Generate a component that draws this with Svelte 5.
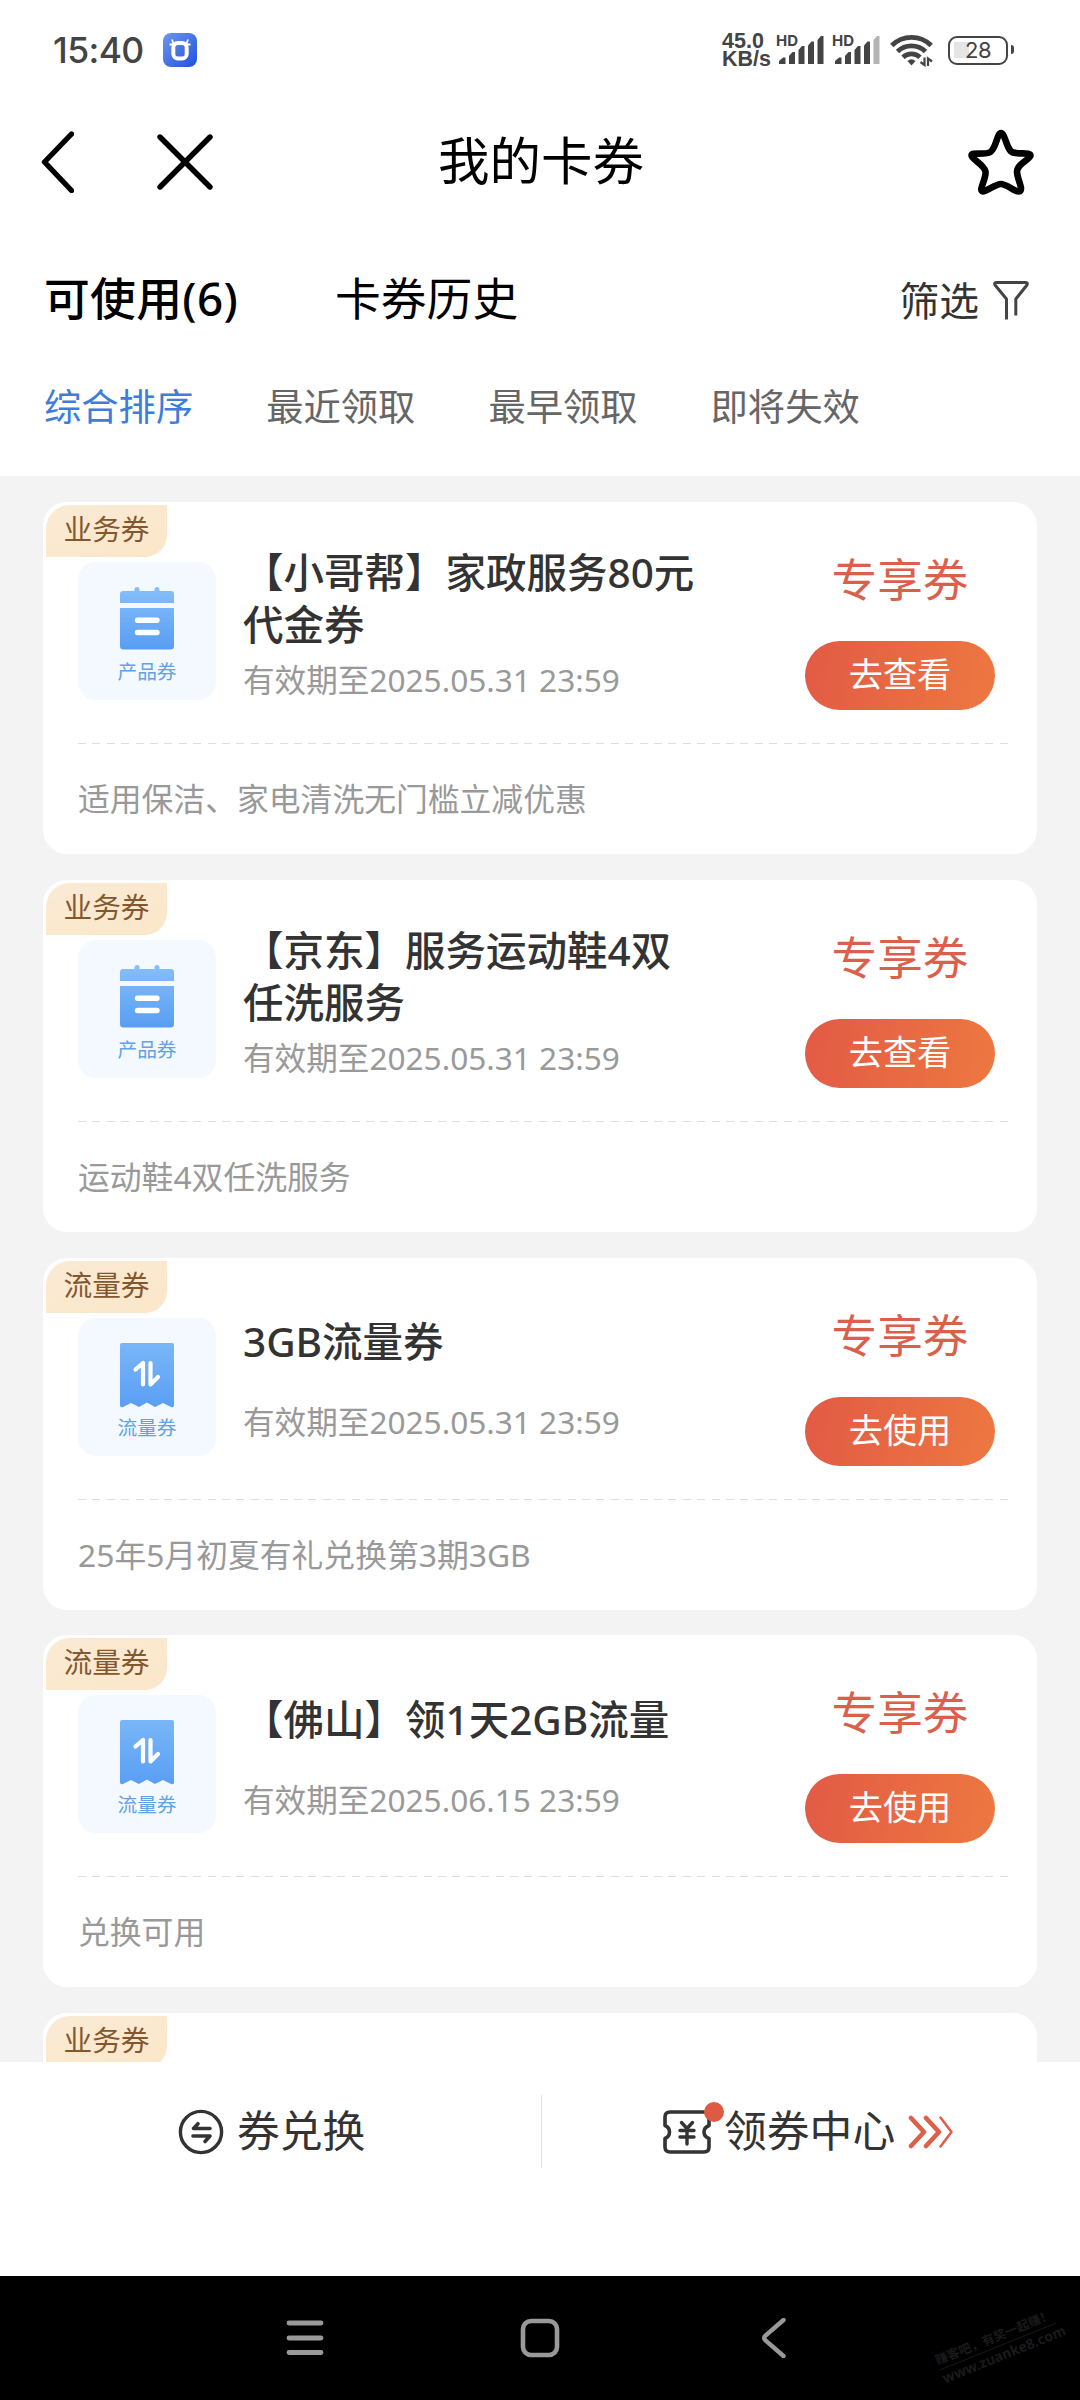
<script>
    const sorts = ['综合排序', '最近领取', '最早领取', '即将失效'];
    let activeSort = '综合排序';

    const coupons = [
        {
            tag: '业务券',
            kind: 'product',
            kindLabel: '产品券',
            title: '【小哥帮】家政服务80元代金券',
            expires: '2025.05.31 23:59',
            action: '去查看',
            desc: '适用保洁、家电清洗无门槛立减优惠'
        },
        {
            tag: '业务券',
            kind: 'product',
            kindLabel: '产品券',
            title: '【京东】服务运动鞋4双任洗服务',
            expires: '2025.05.31 23:59',
            action: '去查看',
            desc: '运动鞋4双任洗服务'
        },
        {
            tag: '流量券',
            kind: 'data',
            kindLabel: '流量券',
            title: '3GB流量券',
            expires: '2025.05.31 23:59',
            action: '去使用',
            desc: '25年5月初夏有礼兑换第3期3GB'
        },
        {
            tag: '流量券',
            kind: 'data',
            kindLabel: '流量券',
            title: '【佛山】领1天2GB流量',
            expires: '2025.06.15 23:59',
            action: '去使用',
            desc: '兑换可用'
        },
        { tag: '业务券' }
    ];

    const signals = [5, 4];
</script>

<div class="phone">
    <div class="status">
        <span class="time">15:40</span>
        <svg class="app-logo" width="34" height="34" viewBox="0 0 34 34">
            <defs>
                <linearGradient id="logoFill" x1="0" y1="0" x2="1" y2="1">
                    <stop offset="0" stop-color="#6f97ea" />
                    <stop offset="1" stop-color="#1f50e0" />
                </linearGradient>
            </defs>
            <rect width="34" height="34" rx="8" fill="url(#logoFill)" />
            <rect x="10.3" y="10" width="13.4" height="15.5" rx="4.5" fill="none" stroke="#fff" stroke-width="4" />
            <path d="M9 6.5l1.5 4.5M6.5 11.5h4M25 6.5L23.5 11M27.5 11.5h-4" stroke="#fff" stroke-width="1.8" />
        </svg>
        <div class="speed"><span>45.0</span><span>KB/s</span></div>
        {#each signals as level}
            <div class="signal">
                <span>HD</span>
                <svg width="46" height="34" viewBox="0 0 46 34">
                    <path d="M1 31v-3l4-3.500h2.500V31z" />
                    <path d="M11 31V23l3.500-4H17V31z" />
                    <path d="M20.500 31V17l3.500-4h2.500V31z" />
                    <path d="M30 31V12.500l3.500-4H36V31z" />
                    <path d="M39.500 31V7L43 3h2.500V31z" opacity={level < 5 ? 0.4 : 1} />
                </svg>
            </div>
        {/each}
        <svg class="wifi" width="44" height="34" viewBox="0 0 44 34">
            <g fill="none" stroke="#444" stroke-width="4.8">
                <path d="M1.800 12.500a28 28 0 0 1 39.400 0" />
                <path d="M7.500 18.500a20 20 0 0 1 28 0" />
                <path d="M13 24.300a12.500 12.500 0 0 1 17 0" />
            </g>
            <path d="M17.500 28q4-3.500 8 0l-4 4.500z" fill="#444" />
            <path d="M30.500 29l4 3v-7.500M42 28.500l-4-3V33" fill="none" stroke="#444" stroke-width="2.2" />
        </svg>
        <div class="battery"><span>28</span></div>
    </div>

    <div class="topbar">
        <svg class="back" width="34" height="62" viewBox="0 0 34 62">
            <path d="M31.500 3L4.500 31 31.500 59.500" fill="none" stroke="#000" stroke-width="5.4" stroke-linecap="round" stroke-linejoin="round" />
        </svg>
        <svg class="close" width="56" height="56" viewBox="0 0 56 56">
            <path d="M3 3l50 50M53 3L3 53" stroke="#000" stroke-width="5.4" stroke-linecap="round" />
        </svg>
        <h1>我的卡券</h1>
        <svg class="star" width="68" height="68" viewBox="0 0 68 68">
            <path d="M34 5C38 5 39.500 22.500 46 24.500S63.500 24 63.500 27.500 50 36 50 43.500 56.500 61 53 63.200 40 56 34 56 18 65 15 63.200 19.500 50 18.500 43.500 4.500 31 4.500 27.500 16 27 22.500 24.500 30 5 34 5z" fill="none" stroke="#000" stroke-width="6.6" stroke-linejoin="round" />
        </svg>
    </div>

    <div class="tabs">
        <span class="tab active">可使用(6)</span>
        <span class="tab">卡券历史</span>
        <span class="filter">
            筛选
            <svg width="36" height="40" viewBox="0 0 36 40">
                <path d="M13.500 38.500V18L2 4q-1-2.500 1.500-2.500h29Q35 1.500 34 4L22.800 18v16.500" fill="none" stroke="#444" stroke-width="3" stroke-linejoin="round" />
            </svg>
        </span>
    </div>

    <div class="sorts">
        {#each sorts as sort}
            <span class:selected={sort === activeSort} on:click={() => (activeSort = sort)} role="presentation">{sort}</span>
        {/each}
    </div>

    <div class="list">
        {#each coupons as coupon}
            <div class="card">
                <span class="tag">{coupon.tag}</span>
                {#if coupon.title}
                    <div class="main">
                        <div class="tile">
                            {#if coupon.kind === 'product'}
                                <svg width="54" height="63" viewBox="0 0 54 63">
                                    <defs>
                                        <linearGradient id="blue" x1="0" y1="0" x2="0" y2="63" gradientUnits="userSpaceOnUse">
                                            <stop offset="0" stop-color="#86bffa" />
                                            <stop offset="1" stop-color="#589df3" />
                                        </linearGradient>
                                    </defs>
                                    <path d="M0 16V7q0-3 3-3h11.500V2.500a2.500 2.500 0 0 1 5 0V4h15V2.500a2.500 2.500 0 0 1 5 0V4H51q3 0 3 3v9z" fill="url(#blue)" />
                                    <path d="M0 21h54v38q0 3.500-3.500 3.500h-47Q0 62.500 0 59z" fill="url(#blue)" />
                                    <path d="M17.500 33.200h19.500M17.500 45.500h19.500" stroke="#fff" stroke-width="5.4" stroke-linecap="round" />
                                </svg>
                            {:else}
                                <svg width="54" height="66" viewBox="0 0 54 66">
                                    <defs>
                                        <linearGradient id="blueData" x1="0" y1="0" x2="0" y2="1">
                                            <stop offset="0" stop-color="#7ab6f7" />
                                            <stop offset="1" stop-color="#5a9ff5" />
                                        </linearGradient>
                                    </defs>
                                    <path d="M0 2q0-2 2-2h50q2 0 2 2v60q0 3-3 2l-8-4-8 4-8-4.500-8 4.500-8-4-8 4q-3 1-3-2z" fill="url(#blueData)" />
                                    <path d="M15.500 26.500l7.500-6.500v21.500M30.500 20v21.500l7.500-7.500" fill="none" stroke="#fff" stroke-width="4.2" stroke-linecap="round" stroke-linejoin="round" />
                                </svg>
                            {/if}
                            <span>{coupon.kindLabel}</span>
                        </div>
                        <div class="info">
                            <h2 class:single={coupon.kind === 'data'}>{coupon.title}</h2>
                            <p>有效期至{coupon.expires}</p>
                        </div>
                        <div class="side">
                            <strong>专享券</strong>
                            <button>{coupon.action}</button>
                        </div>
                    </div>
                    <div class="dash"></div>
                    <p class="desc">{coupon.desc}</p>
                {/if}
            </div>
        {/each}
    </div>

    <div class="footer">
        <div class="entry">
            <svg width="46" height="46" viewBox="0 0 46 46" fill="none" stroke="#333" stroke-linecap="round" stroke-linejoin="round">
                <circle cx="23" cy="23" r="20.6" stroke-width="3.4" />
                <path d="M32 19.500H15.500l4.500-4.800M15 27h17l-5 5.500" stroke-width="3.6" />
            </svg>
            <span>券兑换</span>
        </div>
        <div class="divider"></div>
        <div class="entry center">
            <div class="ticket">
                <svg width="48" height="44" viewBox="0 0 48 44" fill="none" stroke="#333" stroke-linecap="round" stroke-linejoin="round">
                    <path d="M7 2h34q5 0 5 5v8.500q-5 2-5 6.500t5 6.500V37q0 5-5 5H7q-5 0-5-5v-8.500q4.500-2 4.500-6.500T2 15.500V7q0-5 5-5z" stroke-width="3.6" />
                    <path d="M18.500 12.500l5.500 6 5.500-6M24 19v15M17 20.500h14M17 27h14" stroke-width="3.4" />
                </svg>
                <i></i>
            </div>
            <span>领券中心</span>
            <svg class="arrows" width="46" height="34" viewBox="0 0 46 34" fill="none" stroke="#dd604b" stroke-linecap="round" stroke-linejoin="round">
                <path d="M3 3l13 14L3 31M18 3l13 14L18 31" stroke-width="4.6" />
                <path d="M32.500 2.500L43.500 17 32.500 31.500" stroke-width="2.6" />
            </svg>
        </div>
    </div>

    <div class="navbar">
        <svg width="38" height="40" viewBox="0 0 38 40">
            <path d="M3 5h32M3 20h32M3 34.500h32" stroke="#999" stroke-width="4.8" stroke-linecap="round" />
        </svg>
        <svg class="home" width="40" height="40" viewBox="0 0 40 40">
            <rect x="3" y="3" width="34" height="34" rx="8" fill="none" stroke="#999" stroke-width="4.6" />
        </svg>
        <svg width="26" height="40" viewBox="0 0 26 40">
            <path d="M22.500 2L4.500 17.500q-2.500 2.500 0 5L22.500 38" fill="none" stroke="#999" stroke-width="4.4" stroke-linecap="round" />
        </svg>
        <div class="watermark">
            <span>赚客吧，有奖一起赚！</span>
            <span>www.zuanke8.com</span>
        </div>
    </div>
</div>

<style>
    :global(body) {
        background: #fff;
    }

    .phone {
        display: flex;
        flex-direction: column;
        width: 1080px;
        height: 2400px;
        overflow: hidden;
        background: #fff;
        color: #000;
        font-family: "Noto Sans", "Noto Sans CJK SC", sans-serif;
    }

    h1, h2, p {
        margin: 0;
        font-weight: 400;
    }

    svg {
        display: block;
        flex-shrink: 0;
    }

    .status {
        display: flex;
        align-items: center;
        height: 100px;
        box-sizing: border-box;
        padding: 0 66px 0 53px;
        color: #444;
    }

    .time {
        width: 110px;
        font-family: Inter, sans-serif;
        font-size: 35.5px;
        letter-spacing: -0.6px;
        font-weight: 500;
    }

    .speed {
        display: flex;
        flex-direction: column;
        width: 54px;
        margin-left: auto;
        font-family: "Liberation Sans", sans-serif;
        font-size: 21.5px;
        line-height: 18.5px;
        font-weight: 700;
    }

    .signal {
        position: relative;
        width: 48px;
        margin-right: 8px;
        padding-left: 2px;
        box-sizing: border-box;
        fill: #444;
    }

    .signal span {
        position: absolute;
        left: 0;
        top: -1px;
        font: 700 15px/18px Inter, sans-serif;
    }

    .wifi {
        margin-left: 2px;
        margin-right: 14px;
    }

    .battery {
        position: relative;
        width: 60px;
        height: 29px;
        box-sizing: border-box;
        margin-right: 6px;
        border: 2.5px solid #444;
        border-radius: 9px;
        background: linear-gradient(#e5e5e5, #e5e5e5) 4px 4px / 15px 16px no-repeat;
        text-align: center;
        font-family: Inter, sans-serif;
        font-size: 22px;
        letter-spacing: -0.5px;
        line-height: 25px;
    }

    .battery::after {
        content: '';
        position: absolute;
        right: -8px;
        top: 7px;
        width: 3px;
        height: 9px;
        border-radius: 0 3px 3px 0;
        background: #444;
    }

    .topbar {
        display: flex;
        align-items: center;
        height: 124px;
        padding: 0 45px 0 40px;
    }

    .close {
        margin-left: 83px;
    }

    h1 {
        margin: 0 auto 0 225px;
        padding-bottom: 10px;
        font-size: 51.5px;
    }

    .tabs {
        display: flex;
        align-items: center;
        height: 148px;
        box-sizing: border-box;
        padding: 0 51px 4px 44px;
    }

    .tab {
        width: 291px;
        font-size: 45.8px;
    }

    .tab.active {
        font-weight: 500;
        letter-spacing: 0.3px;
    }

    .filter {
        display: flex;
        align-items: center;
        gap: 14px;
        margin-left: auto;
        padding-top: 6px;
        font-size: 39.8px;
        color: #333;
    }

    .filter svg {
        margin-top: 4px;
    }

    .sorts {
        display: flex;
        gap: 73px;
        height: 104px;
        box-sizing: border-box;
        padding: 7px 44px 0;
        font-size: 37.3px;
        line-height: 56px;
        color: #666;
    }

    .sorts .selected {
        color: #3d7ddb;
    }

    .list {
        display: flex;
        flex-direction: column;
        gap: 25.8px;
        height: 1586px;
        box-sizing: border-box;
        padding: 26px 43px 0;
        background: #f3f3f3;
        overflow: hidden;
    }

    .card {
        position: relative;
        flex: 0 0 352px;
        box-sizing: border-box;
        padding: 0 29px 0 35px;
        border-radius: 24px;
        background: #fff;
    }

    .tag {
        position: absolute;
        left: 3px;
        top: 3px;
        width: 121px;
        height: 52px;
        border-radius: 24px 0 22px 0;
        background: linear-gradient(160deg, #faead5, #fbe7c8);
        color: #84572f;
        font-size: 28.7px;
        line-height: 48px;
        text-align: center;
    }

    .main {
        display: flex;
        height: 241px;
    }

    .tile {
        display: flex;
        flex-direction: column;
        align-items: center;
        width: 138px;
        height: 138px;
        box-sizing: border-box;
        margin-top: 60px;
        padding-top: 25px;
        border-radius: 18px;
        background: #f3f9ff;
        color: #62a2e6;
        font-size: 19.7px;
        line-height: 28px;
    }

    .tile span {
        margin-top: auto;
        margin-bottom: 14px;
    }

    .info {
        display: flex;
        flex-direction: column;
        justify-content: center;
        width: 490px;
        height: 246px;
        margin-left: 27px;
        color: #999;
        font-size: 31.6px;
        line-height: 46px;
    }

    h2 {
        width: 460px;
        margin-bottom: 6px;
        color: #333;
        font-size: 40.5px;
        line-height: 52px;
        font-weight: 500;
    }

    h2.single {
        margin-bottom: 31px;
    }

    .side {
        display: flex;
        flex-direction: column;
        align-items: center;
        width: 190px;
        margin-left: 72px;
        padding-top: 44px;
    }

    strong {
        color: #da604b;
        font-size: 45.6px;
        line-height: 66px;
        font-weight: 400;
    }

    button {
        width: 190px;
        height: 69px;
        margin-top: 29px;
        padding: 0 0 3px;
        border: none;
        border-radius: 35px;
        background: linear-gradient(100deg, #e25a45, #ed7840);
        color: #fff;
        font-family: inherit;
        font-size: 34.2px;
        line-height: 60px;
    }

    .dash {
        height: 1px;
        background: repeating-linear-gradient(90deg, #dedede 0 8px, transparent 8px 14.4px);
    }

    .desc {
        margin-top: 31px;
        color: #999;
        font-size: 31.8px;
        line-height: 48px;
    }

    .footer {
        display: flex;
        height: 214px;
        box-sizing: border-box;
        padding-top: 33px;
        color: #333;
        font-size: 42.8px;
    }

    .entry {
        display: flex;
        align-items: center;
        width: 541px;
        height: 73px;
        box-sizing: border-box;
        padding-left: 178px;
    }

    .entry > span {
        margin-left: 13px;
        margin-top: -2px;
        line-height: 60px;
    }

    .divider {
        width: 1px;
        height: 73px;
        background: #e3e3e3;
    }

    .entry.center {
        width: 538px;
        padding-left: 121px;
    }

    .ticket {
        position: relative;
    }

    .ticket i {
        position: absolute;
        left: 41px;
        top: -8px;
        width: 20px;
        height: 20px;
        border-radius: 50%;
        background: #df5a42;
    }

    .arrows {
        margin-left: 13px;
    }

    .navbar {
        position: relative;
        display: flex;
        justify-content: space-between;
        align-items: center;
        height: 124px;
        box-sizing: border-box;
        padding: 0 293px 0 286px;
        background: #000;
    }

    .home {
        margin-right: 5px;
    }

    .watermark {
        position: absolute;
        left: 935px;
        top: 52px;
        width: 126px;
        display: flex;
        flex-direction: column;
        transform: rotate(-22deg);
        color: #1a1a1a;
        font-size: 12.5px;
        line-height: 18px;
        font-weight: 700;
        white-space: nowrap;
    }

    .watermark span:last-child {
        border-top: 1px solid #1a1a1a;
        font-size: 14px;
    }
</style>
